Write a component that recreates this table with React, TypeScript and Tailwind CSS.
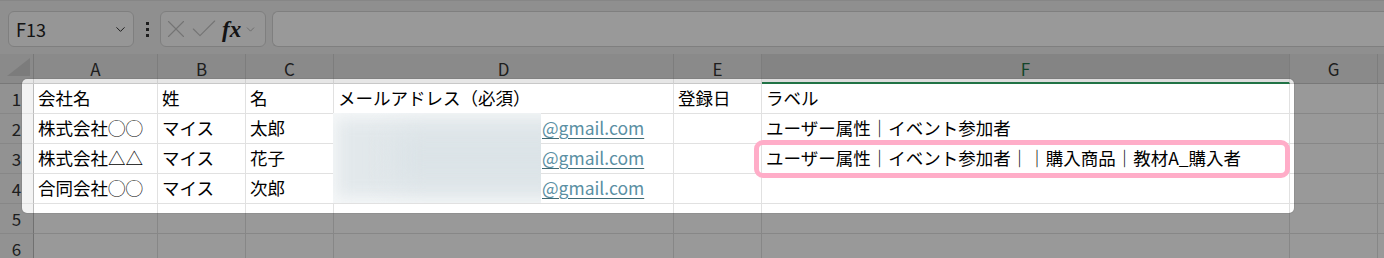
import { ChevronDown, X, Check } from "lucide-react";

const cols = [
  { key: "A", w: 124 },
  { key: "B", w: 88 },
  { key: "C", w: 88 },
  { key: "D", w: 340 },
  { key: "E", w: 88 },
  { key: "F", w: 528 },
  { key: "G", w: 88 },
  { key: "H", w: 88 },
];

const rows: string[][] = [
  ["会社名", "姓", "名", "メールアドレス（必須）", "登録日", "ラベル", "", ""],
  ["株式会社◯◯", "マイス", "太郎", "@mail", "", "ユーザー属性｜イベント参加者", "", ""],
  ["株式会社△△", "マイス", "花子", "@mail", "", "ユーザー属性｜イベント参加者｜｜購入商品｜教材A_購入者", "", ""],
  ["合同会社◯◯", "マイス", "次郎", "@mail", "", "", "", ""],
  ["", "", "", "", "", "", "", ""],
  ["", "", "", "", "", "", "", ""],
];

function Toolbar() {
  return (
    <div className="flex items-start h-[54px] pt-[10px] border-t border-[#e0e0e0]">
      {/* name box */}
      <div className="ml-[8px] w-[126px] h-[36px] rounded-[6px] border border-[#d4d4d4] bg-[#fafafa] flex items-center justify-between pl-[7px] pr-[5px]">
        <span className="text-[18px] text-[#222]">F13</span>
        <ChevronDown size={15} strokeWidth={1.5} color="#222" />
      </div>
      {/* dots */}
      <div className="w-[26px] h-[36px] flex flex-col items-center justify-center gap-[3px]">
        <div className="w-[3px] h-[3px] bg-[#333]" />
        <div className="w-[3px] h-[3px] bg-[#333]" />
        <div className="w-[3px] h-[3px] bg-[#333]" />
      </div>
      {/* formula buttons */}
      <div className="w-[106px] h-[36px] rounded-[6px] border border-[#d4d4d4] bg-[#fafafa] flex items-center pl-[0px]">
        <X size={30} strokeWidth={0.9} color="#c2c2c2" />
        <Check size={32} strokeWidth={0.85} color="#c2c2c2" className="-ml-[3px]" />
        <span className="ml-[2px] text-[23px] font-bold italic text-[#222] leading-none" style={{ fontFamily: '"Liberation Serif", serif' }}>fx</span>
        <ChevronDown size={13} strokeWidth={1.3} color="#9a9a9a" className="ml-[3px]" />
      </div>
      {/* formula input */}
      <div className="ml-[6px] flex-1 h-[36px] rounded-l-[6px] border border-r-0 border-[#d4d4d4] bg-white" />
    </div>
  );
}

function HeaderRow() {
  return (
    <div className="flex h-[30px] bg-[#e6e6e6]">
      <div className="w-[34px] shrink-0 border-r border-b border-[#c8c8c8] relative">
        <svg width="34" height="30" className="absolute left-0 top-0">
          <polygon points="7,22 30,22 30,4" fill="#cfcfcf" />
        </svg>
      </div>
      {cols.map((c) => (
        <div
          key={c.key}
          style={{ width: c.w }}
          className={
            c.key === "F"
              ? "shrink-0 flex justify-center pt-[2px] border-r border-[#d0d0d0] border-b-2 border-b-[#217346] bg-[#dddddd] text-[#217346] text-[17px]"
              : "shrink-0 flex justify-center pt-[2px] border-r border-b border-[#d0d0d0] border-b-[#c8c8c8] text-[#333] text-[17px]"
          }
        >
          {c.key}
        </div>
      ))}
    </div>
  );
}

function Cell({ w, text }: { w: number; text: string }) {
  if (text === "@mail") {
    return (
      <div style={{ width: w }} className="shrink-0 h-[30px] border-r border-b border-[#e1e1e1] flex items-center pl-[4px] whitespace-nowrap">
        <span className="w-[204px] inline-block shrink-0" />
        <span className="text-[#5a8fa3] underline decoration-[#3f6a74] underline-offset-[3px]">@gmail.com</span>
      </div>
    );
  }
  return (
    <div style={{ width: w }} className="shrink-0 h-[30px] border-r border-b border-[#e1e1e1] flex items-center pl-[4px] whitespace-nowrap text-black">
      {text}
    </div>
  );
}

export default function App() {
  return (
    <div
      className="relative w-[1384px] h-[258px] overflow-hidden bg-[#eeeeee] text-[17.5px]"
      style={{ fontFamily: '"Noto Sans CJK JP", "Noto Sans", sans-serif' }}
    >
      <Toolbar />
      <div className="bg-white">
        <HeaderRow />
        {rows.map((r, i) => (
          <div key={i} className="flex">
            <div className="w-[34px] shrink-0 h-[30px] bg-[#f3f3f3] border-r border-r-[#bcbcbc] border-b border-b-[#e1e1e1] flex items-center justify-center text-[17px] text-[#333]">
              {i + 1}
            </div>
            {cols.map((c, j) => (
              <Cell key={c.key} w={c.w} text={r[j]} />
            ))}
          </div>
        ))}
      </div>

      {/* redacted local part of the e-mail addresses */}
      <div className="absolute left-[333px] top-[113px] w-[208px] h-[90px] overflow-hidden bg-[#f6f8f9]">
        <div className="absolute left-[4px] -right-[30px] top-[6px] bottom-[6px] bg-[#e2e8eb] blur-[8px]" />
        <div className="absolute left-[60px] -right-[30px] top-[20px] bottom-[20px] bg-[#dbe3e7] blur-[14px]" />
      </div>

      {/* spotlight */}
      <div className="absolute left-[22px] top-[79px] w-[1272px] h-[134px] rounded-[5px] shadow-[0_0_0_1px_rgba(0,0,0,0.06),0_0_0_1600px_rgba(0,0,0,0.4)] pointer-events-none" />

      {/* pink highlight */}
      <div className="absolute left-[754px] top-[140px] w-[536px] h-[38px] rounded-[9px] border-[5px] border-[#ffadc8] pointer-events-none" />
    </div>
  );
}
